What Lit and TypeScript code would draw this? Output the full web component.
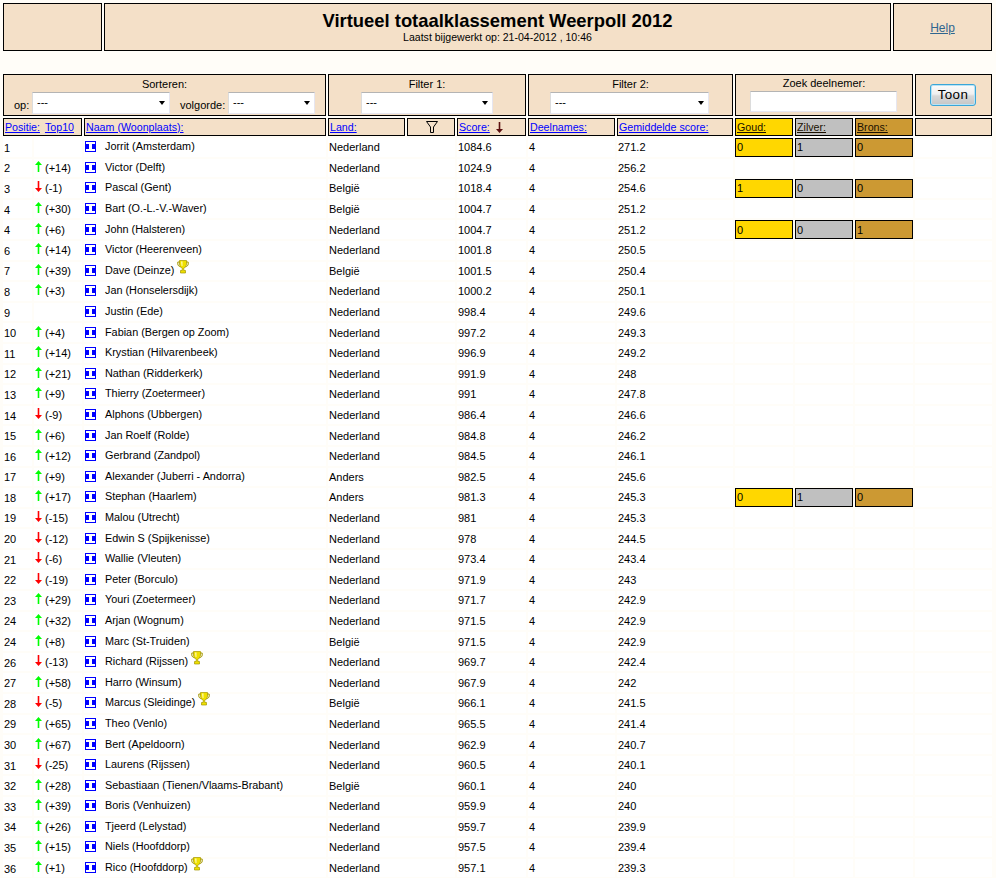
import { LitElement, css, html, nothing } from "lit";
import { customElement } from "lit/decorators.js";

type Row = {
  pos: number;
  top?: number;
  name: string;
  cup?: boolean;
  land?: string;
  score: string;
  avg: string;
  medals?: [number, number, number];
};

const rows: Row[] = [
  { pos: 1, name: "Jorrit (Amsterdam)", score: "1084.6", avg: "271.2", medals: [0, 1, 0] },
  { pos: 2, top: 14, name: "Victor (Delft)", score: "1024.9", avg: "256.2" },
  { pos: 3, top: -1, name: "Pascal (Gent)", land: "België", score: "1018.4", avg: "254.6", medals: [1, 0, 0] },
  { pos: 4, top: 30, name: "Bart (O.-L.-V.-Waver)", land: "België", score: "1004.7", avg: "251.2" },
  { pos: 4, top: 6, name: "John (Halsteren)", score: "1004.7", avg: "251.2", medals: [0, 0, 1] },
  { pos: 6, top: 14, name: "Victor (Heerenveen)", score: "1001.8", avg: "250.5" },
  { pos: 7, top: 39, name: "Dave (Deinze)", cup: true, land: "België", score: "1001.5", avg: "250.4" },
  { pos: 8, top: 3, name: "Jan (Honselersdijk)", score: "1000.2", avg: "250.1" },
  { pos: 9, name: "Justin (Ede)", score: "998.4", avg: "249.6" },
  { pos: 10, top: 4, name: "Fabian (Bergen op Zoom)", score: "997.2", avg: "249.3" },
  { pos: 11, top: 14, name: "Krystian (Hilvarenbeek)", score: "996.9", avg: "249.2" },
  { pos: 12, top: 21, name: "Nathan (Ridderkerk)", score: "991.9", avg: "248" },
  { pos: 13, top: 9, name: "Thierry (Zoetermeer)", score: "991", avg: "247.8" },
  { pos: 14, top: -9, name: "Alphons (Ubbergen)", score: "986.4", avg: "246.6" },
  { pos: 15, top: 6, name: "Jan Roelf (Rolde)", score: "984.8", avg: "246.2" },
  { pos: 16, top: 12, name: "Gerbrand (Zandpol)", score: "984.5", avg: "246.1" },
  { pos: 17, top: 9, name: "Alexander (Juberri - Andorra)", land: "Anders", score: "982.5", avg: "245.6" },
  { pos: 18, top: 17, name: "Stephan (Haarlem)", land: "Anders", score: "981.3", avg: "245.3", medals: [0, 1, 0] },
  { pos: 19, top: -15, name: "Malou (Utrecht)", score: "981", avg: "245.3" },
  { pos: 20, top: -12, name: "Edwin S (Spijkenisse)", score: "978", avg: "244.5" },
  { pos: 21, top: -6, name: "Wallie (Vleuten)", score: "973.4", avg: "243.4" },
  { pos: 22, top: -19, name: "Peter (Borculo)", score: "971.9", avg: "243" },
  { pos: 23, top: 29, name: "Youri (Zoetermeer)", score: "971.7", avg: "242.9" },
  { pos: 24, top: 32, name: "Arjan (Wognum)", score: "971.5", avg: "242.9" },
  { pos: 24, top: 8, name: "Marc (St-Truiden)", land: "België", score: "971.5", avg: "242.9" },
  { pos: 26, top: -13, name: "Richard (Rijssen)", cup: true, score: "969.7", avg: "242.4" },
  { pos: 27, top: 58, name: "Harro (Winsum)", score: "967.9", avg: "242" },
  { pos: 28, top: -5, name: "Marcus (Sleidinge)", cup: true, land: "België", score: "966.1", avg: "241.5" },
  { pos: 29, top: 65, name: "Theo (Venlo)", score: "965.5", avg: "241.4" },
  { pos: 30, top: 67, name: "Bert (Apeldoorn)", score: "962.9", avg: "240.7" },
  { pos: 31, top: -25, name: "Laurens (Rijssen)", score: "960.5", avg: "240.1" },
  { pos: 32, top: 28, name: "Sebastiaan (Tienen/Vlaams-Brabant)", land: "België", score: "960.1", avg: "240" },
  { pos: 33, top: 39, name: "Boris (Venhuizen)", score: "959.9", avg: "240" },
  { pos: 34, top: 26, name: "Tjeerd (Lelystad)", score: "959.7", avg: "239.9" },
  { pos: 35, top: 15, name: "Niels (Hoofddorp)", score: "957.5", avg: "239.4" },
  { pos: 36, top: 1, name: "Rico (Hoofddorp)", cup: true, score: "957.1", avg: "239.3" },
];

const arrowUp = html`<svg class="arrow" width="7" height="11" viewBox="0 0 7 11">
  <path d="M3.5 0 L7 4 H4.3 V11 H2.7 V4 H0 Z" fill="#00ff00" />
</svg>`;

const arrowDown = html`<svg class="arrow" width="7" height="11" viewBox="0 0 7 11">
  <path d="M2.7 0 H4.3 V7 H7 L3.5 11 L0 7 H2.7 Z" fill="#ff0000" />
</svg>`;

const flag = html`<svg class="flag" width="11" height="11" viewBox="0 0 11 11" shape-rendering="crispEdges">
  <rect width="11" height="11" fill="#0000ff" />
  <path d="M1 1 H10 V3 H7 V8 H10 V10 H1 V8 H4 V3 H1 Z" fill="#fff" />
</svg>`;

const cup = html`<svg class="cup" width="12" height="14" viewBox="0 0 12 14">
  <path d="M3 2 H0.8 V4 C0.8 5.5 2 6.5 4 7 M9 2 H11.2 V4 C11.2 5.5 10 6.5 8 7" fill="none" stroke="#a39600" stroke-width="1" />
  <path d="M2.5 0.5 H9.5 V4 C9.5 6 8 7.5 6.8 8 V10.5 H8.5 V13 H3.5 V10.5 H5.2 V8 C4 7.5 2.5 6 2.5 4 Z" fill="#efe000" stroke="#a39600" stroke-width="0.7" />
  <path d="M4 1.5 H5.5 V6 H4.6 Z" fill="#fff9b0" />
</svg>`;

const funnel = html`<svg width="12" height="12" viewBox="0 0 12 12">
  <path d="M0.5 0.5 H11.5 L7.5 6 V11.5 H4.5 V6 Z" fill="none" stroke="#000" />
</svg>`;

const sortDown = html`<svg width="7" height="11" viewBox="0 0 7 11">
  <path d="M2.7 0 H4.3 V7 H7 L3.5 11 L0 7 H2.7 Z" fill="#5c1010" />
</svg>`;

@customElement("app-root")
export class AppRoot extends LitElement {
  static styles = css`
    :host {
      display: block;
      background: #fffdf8;
      font-family: "Liberation Sans", Arial, sans-serif;
      font-size: 11px;
      color: #000;
      height: 878px;
      overflow: hidden;
    }

    .page {
      padding: 3px 0 0 3px;
      width: 990px;
    }

    .box {
      background: #f4e0c8;
      border: 1px solid #000;
      box-sizing: border-box;
    }

    .top {
      display: grid;
      grid-template-columns: 99px 787px 99px;
      column-gap: 2px;
      height: 48px;
      margin-bottom: 23px;
    }

    .title {
      text-align: center;
      padding-top: 7px;
    }

    .title h1 {
      margin: 0;
      font-size: 18.4px;
      line-height: 20px;
      font-weight: bold;
    }

    .title p {
      margin: 0;
      font-size: 10.56px;
      line-height: 13px;
    }

    .help {
      display: flex;
      align-items: center;
      justify-content: center;
      font-size: 12px;
      padding-top: 2px;
    }

    .help a {
      color: #2f6690;
      text-decoration: underline;
    }

    .grid {
      display: grid;
      grid-template-columns: 29px 48px 242px 77px 48px 69px 87px 116px 58px 58px 58px 77px;
      grid-template-rows: 42px 18px;
      grid-auto-rows: 18.6px;
      gap: 2px;
    }

    .filter {
      text-align: center;
      padding-top: 3px;
      line-height: 13px;
    }

    .s3 { grid-column: span 3; }
    .s2 { grid-column: span 2; }

    .controls {
      display: flex;
      align-items: flex-end;
      gap: 4px;
      margin-top: 1px;
      padding-left: 10px;
    }

    .controls label {
      flex: none;
      width: 14px;
      padding-bottom: 2px;
      text-align: left;
      white-space: nowrap;
    }

    .controls label.second {
      width: 44px;
      margin-left: 6px;
    }

    .pick {
      position: relative;
      display: block;
      height: 22px;
    }

    .pick::after {
      content: "";
      position: absolute;
      right: 5px;
      top: 9px;
      border-top: 4px solid #000;
      border-left: 3.5px solid transparent;
      border-right: 3.5px solid transparent;
    }

    select, input {
      display: block;
      width: 100%;
      box-sizing: border-box;
      height: 22px;
      margin: 0;
      appearance: none;
      background: #fff;
      border: 1px solid #fff;
      border-top-color: #b4b4b4;
      border-left-color: #dcdcdc;
      border-right-color: #e6e6f0;
      border-bottom-color: #e6e6f0;
      border-radius: 0;
      font: 11px "Liberation Sans", Arial, sans-serif;
      padding: 0 0 2px 4px;
      color: #000;
    }

    .w-op { flex: none; width: 138px; }
    .w-order { flex: none; width: 87px; }
    .w-f1 { width: 132px; margin: 1px auto 0; }
    .w-f2 { width: 159px; margin: 1px 0 0 21px; }

    .search {
      padding-top: 2px;
    }

    .search input {
      width: 147px;
      height: 21px;
      margin: 1px 0 0 14px;
    }

    .action {
      display: flex;
      padding: 9px 0 0 14px;
    }

    button {
      width: 46px;
      height: 22px;
      padding: 0 0 2px;
      border: 1px solid #3aa6d8;
      border-radius: 3px;
      background: linear-gradient(#fbfbfb, #f0f0f0 45%, #d8d8d8 55%, #c6c6c6);
      box-shadow: inset 0 0 0 1px #b9e3f5;
      font: 13.33px "Liberation Sans", Arial, sans-serif;
      color: #000;
      letter-spacing: 0.4px;
    }

    .head {
      display: flex;
      align-items: center;
      padding-left: 1px;
      line-height: 14px;
      font-size: 10.67px;
      white-space: nowrap;
    }

    .head a {
      color: #0000ff;
      text-decoration: underline;
    }

    .head.pos {
      gap: 5px;
    }

    .head.center {
      justify-content: center;
    }

    .head.score svg {
      margin-left: 6px;
    }

    .head.metal a {
      color: #1a1000;
    }

    .gold { background: #ffd700; }
    .silver { background: #c0c0c0; }
    .bronze { background: #cc9933; }

    .cell {
      background: #fff;
      display: flex;
      align-items: center;
      white-space: nowrap;
      padding: 0 0 0 1px;
      box-sizing: border-box;
      min-width: 0;
    }

    .cell.rank {
      padding-top: 1px;
    }

    .cell.move {
      gap: 3px;
    }

    .arrow {
      flex: none;
      margin-top: -3px;
    }

    .cell.name {
      padding: 0 0 2px 1px;
      font-size: 10.85px;
    }

    .flag {
      flex: none;
      margin-right: 9px;
      margin-top: 1px;
    }

    .cup {
      flex: none;
      margin: -6px 0 0 3px;
    }

    .medal {
      border: 1px solid #000;
      box-sizing: border-box;
      display: flex;
      align-items: center;
      padding-left: 1px;
    }
  `;

  private renderMedals(medals?: [number, number, number]) {
    if (!medals) {
      return html`<div class="cell"></div><div class="cell"></div><div class="cell"></div>`;
    }
    return html`
      <div class="medal gold">${medals[0]}</div>
      <div class="medal silver">${medals[1]}</div>
      <div class="medal bronze">${medals[2]}</div>
    `;
  }

  private renderRow(r: Row) {
    return html`
      <div class="cell rank">${r.pos}</div>
      <div class="cell move">
        ${r.top === undefined
          ? nothing
          : html`${r.top > 0 ? arrowUp : arrowDown}<span>(${r.top > 0 ? "+" : ""}${r.top})</span>`}
      </div>
      <div class="cell name">${flag}<span>${r.name}</span>${r.cup ? cup : nothing}</div>
      <div class="cell s2">${r.land ?? "Nederland"}</div>
      <div class="cell">${r.score}</div>
      <div class="cell">4</div>
      <div class="cell">${r.avg}</div>
      ${this.renderMedals(r.medals)}
      <div class="cell"></div>
    `;
  }

  render() {
    return html`
      <div class="page">
        <div class="top">
          <div class="box"></div>
          <div class="box title">
            <h1>Virtueel totaalklassement Weerpoll 2012</h1>
            <p>Laatst bijgewerkt op: 21-04-2012 , 10:46</p>
          </div>
          <div class="box help"><a href="#">Help</a></div>
        </div>

        <div class="grid">
          <div class="box filter s3">
            Sorteren:
            <div class="controls">
              <label>op:</label>
              <span class="pick w-op"><select><option>---</option></select></span>
              <label class="second">volgorde:</label>
              <span class="pick w-order"><select><option>---</option></select></span>
            </div>
          </div>
          <div class="box filter s3">
            Filter 1:
            <span class="pick w-f1"><select><option>---</option></select></span>
          </div>
          <div class="box filter s2">
            Filter 2:
            <span class="pick w-f2"><select><option>---</option></select></span>
          </div>
          <div class="box filter s3 search">
            Zoek deelnemer:
            <input type="text" />
          </div>
          <div class="box action"><button>Toon</button></div>

          <div class="box head pos s2"><a href="#">Positie:</a><a href="#">Top10</a></div>
          <div class="box head"><a href="#">Naam (Woonplaats):</a></div>
          <div class="box head"><a href="#">Land:</a></div>
          <div class="box head center">${funnel}</div>
          <div class="box head score"><a href="#">Score:</a>${sortDown}</div>
          <div class="box head"><a href="#">Deelnames:</a></div>
          <div class="box head"><a href="#">Gemiddelde score:</a></div>
          <div class="box head metal gold"><a href="#">Goud:</a></div>
          <div class="box head metal silver"><a href="#">Zilver:</a></div>
          <div class="box head metal bronze"><a href="#">Brons:</a></div>
          <div class="box head"></div>

          ${rows.map((r) => this.renderRow(r))}
        </div>
      </div>
    `;
  }
}
